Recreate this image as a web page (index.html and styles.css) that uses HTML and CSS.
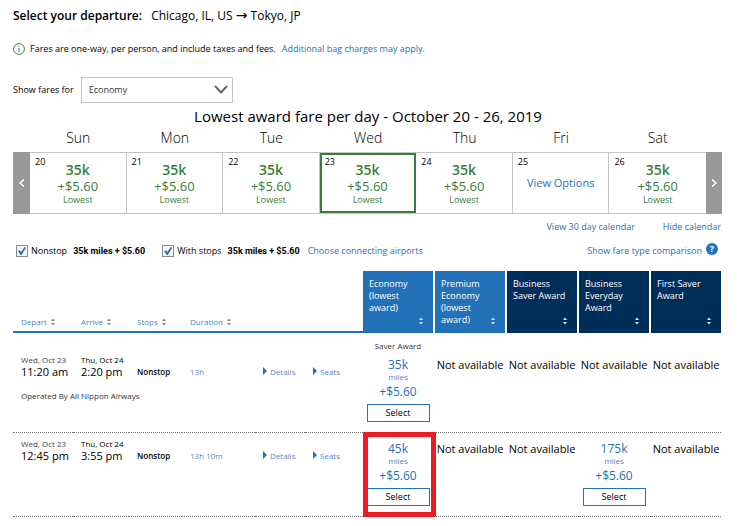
FILE: index.html
```html
<!DOCTYPE html>
<html lang="en">
<head>
<meta charset="utf-8">
<meta name="viewport" content="width=device-width, initial-scale=1">
<title>Select your departure</title>
<link rel="stylesheet" href="styles.css">
</head>
<body>
<svg class="defs" width="0" height="0" aria-hidden="true">
  <symbol id="sort" viewBox="0 0 6 8"><path d="M3 0.500 5 3H1zM3 7.500 1 5h4z"/></symbol>
  <symbol id="play" viewBox="0 0 4 8"><path d="M0 0 4 4 0 8z"/></symbol>
</svg>
<main class="page">
  <h1 class="title">Select your departure: <span class="route">Chicago, IL, US <span class="arrow">→</span> Tokyo, JP</span></h1>

  <p class="note">
    <svg class="info" viewBox="0 0 12 12" aria-hidden="true"><circle cx="6" cy="6" r="5.4"/><path d="M6 5v4.2M6 2.6v1.3"/></svg>
    <span class="note-text">Fares are one-way, per person, and include taxes and fees.</span>
    <a href="#bags">Additional bag charges may apply.</a>
  </p>

  <div class="cabin">
    <label for="cabin">Show fares for</label>
    <div class="select-wrap">
      <select id="cabin"><option>Economy</option><option>Business or First</option></select>
      <svg class="chevron" viewBox="0 0 14 9" aria-hidden="true"><path d="M1 1l6 6.500 6-6.500"/></svg>
    </div>
  </div>

  <section class="calendar">
    <h2 class="calendar-title">Lowest award fare per day - October 20 - 26, 2019</h2>
    <div class="weekdays"><span>Sun</span><span>Mon</span><span>Tue</span><span>Wed</span><span>Thu</span><span>Fri</span><span>Sat</span></div>
    <div class="week">
      <button class="nav" type="button" aria-label="Previous week"><svg viewBox="0 0 6 8"><path d="M5 .5 1 4l4 3.500"/></svg></button>
      <div class="days">
        <div class="day"><span class="date">20</span><b>35k</b><span class="fee">+$5.60</span><span class="tag">Lowest</span></div>
        <div class="day"><span class="date">21</span><b>35k</b><span class="fee">+$5.60</span><span class="tag">Lowest</span></div>
        <div class="day"><span class="date">22</span><b>35k</b><span class="fee">+$5.60</span><span class="tag">Lowest</span></div>
        <div class="day selected"><span class="date">23</span><b>35k</b><span class="fee">+$5.60</span><span class="tag">Lowest</span></div>
        <div class="day"><span class="date">24</span><b>35k</b><span class="fee">+$5.60</span><span class="tag">Lowest</span></div>
        <div class="day options"><span class="date">25</span><a href="#options">View Options</a></div>
        <div class="day"><span class="date">26</span><b>35k</b><span class="fee">+$5.60</span><span class="tag">Lowest</span></div>
      </div>
      <button class="nav" type="button" aria-label="Next week"><svg viewBox="0 0 6 8"><path d="M1 .5 5 4 1 7.500"/></svg></button>
    </div>
    <div class="calendar-links"><a href="#month">View 30 day calendar</a><a href="#hide">Hide calendar</a></div>
  </section>

  <div class="filters">
    <input type="checkbox" id="nonstop" checked><label for="nonstop">Nonstop</label><span class="from">35k miles + $5.60</span>
    <input type="checkbox" id="stops" checked><label for="stops">With stops</label><span class="from">35k miles + $5.60</span>
    <a href="#airports">Choose connecting airports</a>
    <a class="compare" href="#compare">Show fare type comparison</a>
    <span class="help">?</span>
  </div>

  <table class="flights">
    <colgroup><col class="c-depart"><col class="c-arrive"><col class="c-stops"><col class="c-duration"><col class="c-details"><col><col class="c-fare"><col class="c-fare"><col class="c-fare"><col class="c-fare"><col class="c-last"></colgroup>
    <thead>
      <tr>
        <th class="plain"><a href="#depart">Depart</a> <svg class="sort"><use href="#sort"/></svg></th>
        <th class="plain"><a href="#arrive">Arrive</a> <svg class="sort"><use href="#sort"/></svg></th>
        <th class="plain"><a href="#stops">Stops</a> <svg class="sort"><use href="#sort"/></svg></th>
        <th class="plain" colspan="3"><a href="#duration">Duration</a> <svg class="sort"><use href="#sort"/></svg></th>
        <th class="cabin-head economy">Economy (lowest award)<svg class="sort"><use href="#sort"/></svg></th>
        <th class="cabin-head economy">Premium Economy (lowest award)<svg class="sort"><use href="#sort"/></svg></th>
        <th class="cabin-head">Business Saver Award<svg class="sort"><use href="#sort"/></svg></th>
        <th class="cabin-head">Business Everyday Award<svg class="sort"><use href="#sort"/></svg></th>
        <th class="cabin-head">First Saver Award<svg class="sort"><use href="#sort"/></svg></th>
      </tr>
    </thead>
    <tbody>
      <tr class="tall">
        <td><div class="when">Wed, Oct 23</div><div class="time">11:20 am</div><div class="carrier">Operated By All Nippon Airways</div></td>
        <td><div class="when arrival">Thu, Oct 24</div><div class="time">2:20 pm</div></td>
        <td class="mid stops">Nonstop</td>
        <td class="mid"><a href="#d1">13h</a></td>
        <td class="mid"><a href="#details1"><svg class="play"><use href="#play"/></svg>Details</a></td>
        <td class="mid"><a href="#seats1"><svg class="play"><use href="#play"/></svg>Seats</a></td>
        <td class="fare saver"><div class="award">Saver Award</div><div class="price">35k</div><div class="unit">miles</div><div class="tax">+$5.60</div><button type="button">Select</button></td>
        <td class="fare">Not available</td>
        <td class="fare">Not available</td>
        <td class="fare">Not available</td>
        <td class="fare">Not available</td>
      </tr>
      <tr>
        <td><div class="when">Wed, Oct 23</div><div class="time">12:45 pm</div></td>
        <td><div class="when arrival">Thu, Oct 24</div><div class="time">3:55 pm</div></td>
        <td class="mid stops">Nonstop</td>
        <td class="mid"><a href="#d2">13h 10m</a></td>
        <td class="mid"><a href="#details2"><svg class="play"><use href="#play"/></svg>Details</a></td>
        <td class="mid"><a href="#seats2"><svg class="play"><use href="#play"/></svg>Seats</a></td>
        <td class="fare marked"><div class="price">45k</div><div class="unit">miles</div><div class="tax">+$5.60</div><button type="button">Select</button></td>
        <td class="fare">Not available</td>
        <td class="fare">Not available</td>
        <td class="fare"><div class="price">175k</div><div class="unit">miles</div><div class="tax">+$5.60</div><button type="button">Select</button></td>
        <td class="fare">Not available</td>
      </tr>
    </tbody>
  </table>
</main>
</body>
</html>
```
FILE: styles.css
```css
* { box-sizing: border-box; }
body {
  margin: 0;
  background: #fff;
  color: #000;
  font: 9px/12px "Open Sans", "Noto Sans", sans-serif;
}
a { color: #2372b9; text-decoration: none; }
h1, h2, p { margin: 0; }
button, select, input { font: inherit; margin: 0; }
.defs { position: absolute; }
.page { padding: 8px 34px 8px 13px; }

.title { font-size: 12px; line-height: 16px; font-weight: 600; }
.route { font-weight: 400; margin-left: 6px; }
.arrow { font-family: "DejaVu Sans", sans-serif; font-size: 14px; line-height: 1; }

.note { display: flex; align-items: center; margin-top: 18px; line-height: 14px; }
.note-text { margin: 0 6px 0 5px; font-weight: 500; }
.info { width: 12px; height: 12px; fill: none; stroke: #3f8040; }

.cabin { display: flex; align-items: center; gap: 7px; margin-top: 21px; }
.select-wrap { position: relative; width: 152px; }
.select-wrap select {
  display: block;
  width: 100%;
  height: 26px;
  padding: 0 7px;
  border: 1px solid #c4c4c4;
  border-radius: 0;
  background: #fff;
  color: #333;
  appearance: none;
}
.chevron {
  position: absolute;
  right: 5px;
  top: 8px;
  width: 14px;
  height: 9px;
  fill: none;
  stroke: #666;
  stroke-width: 2;
  pointer-events: none;
}

.calendar-title { margin-top: 4px; padding-left: 2px; text-align: center; font-size: 15px; line-height: 18px; font-weight: 400; }
.weekdays { display: grid; grid-template-columns: repeat(7, 1fr); margin: 3px 0 0; padding: 0 15px 0 17px; text-align: center; font-size: 14px; line-height: 20px; font-weight: 300; }
.week { display: flex; margin: 4px -1px 0 0; height: 62px; }
.nav { display: flex; align-items: center; justify-content: center; width: 16px; padding: 0; border: 0; background: #999; }
.nav:first-child { width: 17px; }
.nav svg { width: 6px; height: 8px; fill: none; stroke: #fff; stroke-width: 1.5; }
.days { flex: 1; display: grid; grid-template-columns: repeat(7, 1fr); border: solid #c4c4c4; border-width: 1px 0; }
.day { position: relative; display: flex; flex-direction: column; align-items: center; padding-top: 9px; border-right: 1px solid #c4c4c4; color: #3a7d3b; }
.day:last-child { border-right: 0; }
.day b { font-size: 14px; line-height: 16px; font-weight: 600; }
.fee { font-size: 13px; line-height: 17px; }
.tag { line-height: 10px; }
.date { position: absolute; left: 5px; top: 3px; color: #000; }
.selected { outline: 2px solid #3a7d3b; outline-offset: -2px; }
.options { justify-content: center; padding-top: 0; font-size: 11px; }
.options .date { font-size: 9px; }
.calendar-links { display: flex; justify-content: flex-end; gap: 28px; margin-top: 7px; }

.filters { display: flex; align-items: center; margin-top: 10px; padding: 0 3px 0 2px; line-height: 16px; }
.filters input {
  position: relative;
  width: 12px;
  height: 12px;
  margin: 0 3px 0 1px;
  border: 1px solid #8a8a8a;
  background: #f3f6fa;
  appearance: none;
}
.filters input:checked::before {
  content: "";
  position: absolute;
  inset: 1px;
  background: #2372b9;
  clip-path: polygon(0 50%, 22% 40%, 40% 62%, 82% 0, 100% 8%, 44% 100%, 32% 100%);
}
.from { margin: 0 8px 0 6px; font-family: Roboto, sans-serif; font-weight: 700; }
.from + input { margin-left: 9px; }
.compare { margin-left: auto; }
.help { width: 12px; height: 12px; margin: 0 0 4px 4px; border-radius: 50%; background: #2372b9; color: #fff; font-weight: 700; line-height: 12px; text-align: center; }

.flights { width: 100%; margin-top: 12px; border-collapse: separate; border-spacing: 0; table-layout: fixed; }
.c-depart { width: 60px; }
.c-arrive { width: 56px; }
.c-stops { width: 53px; }
.c-duration { width: 73px; }
.c-details { width: 50px; }
.c-fare { width: 72px; }
.c-last { width: 70px; }
th { height: 62px; text-align: left; font-weight: 400; }
.plain { padding: 0 0 2px 8px; vertical-align: bottom; border-bottom: 2px solid #2372b9; font-size: 8px; line-height: 14px; }
.plain a { color: #4f82c4; }
.sort { width: 6px; height: 8px; fill: #888; }
.plain .sort { margin-left: 1px; vertical-align: -1px; }
.cabin-head {
  position: relative;
  padding: 7px 8px 0 6px;
  vertical-align: top;
  border-right: 2px solid #fff;
  background: #002e5b;
  color: #fff;
}
.economy { background: #2372b9; }
.cabin-head .sort { position: absolute; right: 9px; bottom: 8px; fill: #dde6ef; }
.cabin-head:last-child { border-right: 0; }

td { height: 84px; padding: 5px 0 0 8px; vertical-align: top; border-bottom: 1px dotted #777; }
.tall td { height: 100px; padding-top: 21px; }
.when { font-size: 8px; color: #444; }
.arrival { color: #000; font-weight: 500; }
.time { font-size: 11px; line-height: 12px; }
.carrier { margin-top: 12px; font-size: 8px; color: #333; white-space: nowrap; }
.mid { padding-top: 17px; font-size: 8px; }
.tall .mid { padding-top: 33px; }
.mid a { color: #5a86c4; }
.stops { font-weight: 600; }
.play { width: 4px; height: 8px; margin-right: 3px; fill: #2372b9; }
.fare { position: relative; padding: 8px 2px 0 0; text-align: center; font-size: 11px; line-height: 16px; white-space: nowrap; }
.tall .fare { padding-top: 24px; }
.tall .saver { padding-top: 5px; }
.fare:last-child { padding-right: 0; }
.award { margin-bottom: 3px; font-size: 8px; color: #333; }
.price, .tax { font-size: 12px; color: #2372b9; }
.unit { font-size: 8px; line-height: 8px; color: #5a86c4; }
.tax { margin-top: 2px; line-height: 18px; }
.fare button { display: block; width: 63px; height: 18px; margin: 3px auto 0; padding: 0; border: 1px solid #2372b9; background: #fff; font-size: 9px; line-height: 16px; color: #000; }
.marked::after { content: ""; position: absolute; inset: -1px -1px -1px 0; border: 5px solid #ed1c24; }
```
